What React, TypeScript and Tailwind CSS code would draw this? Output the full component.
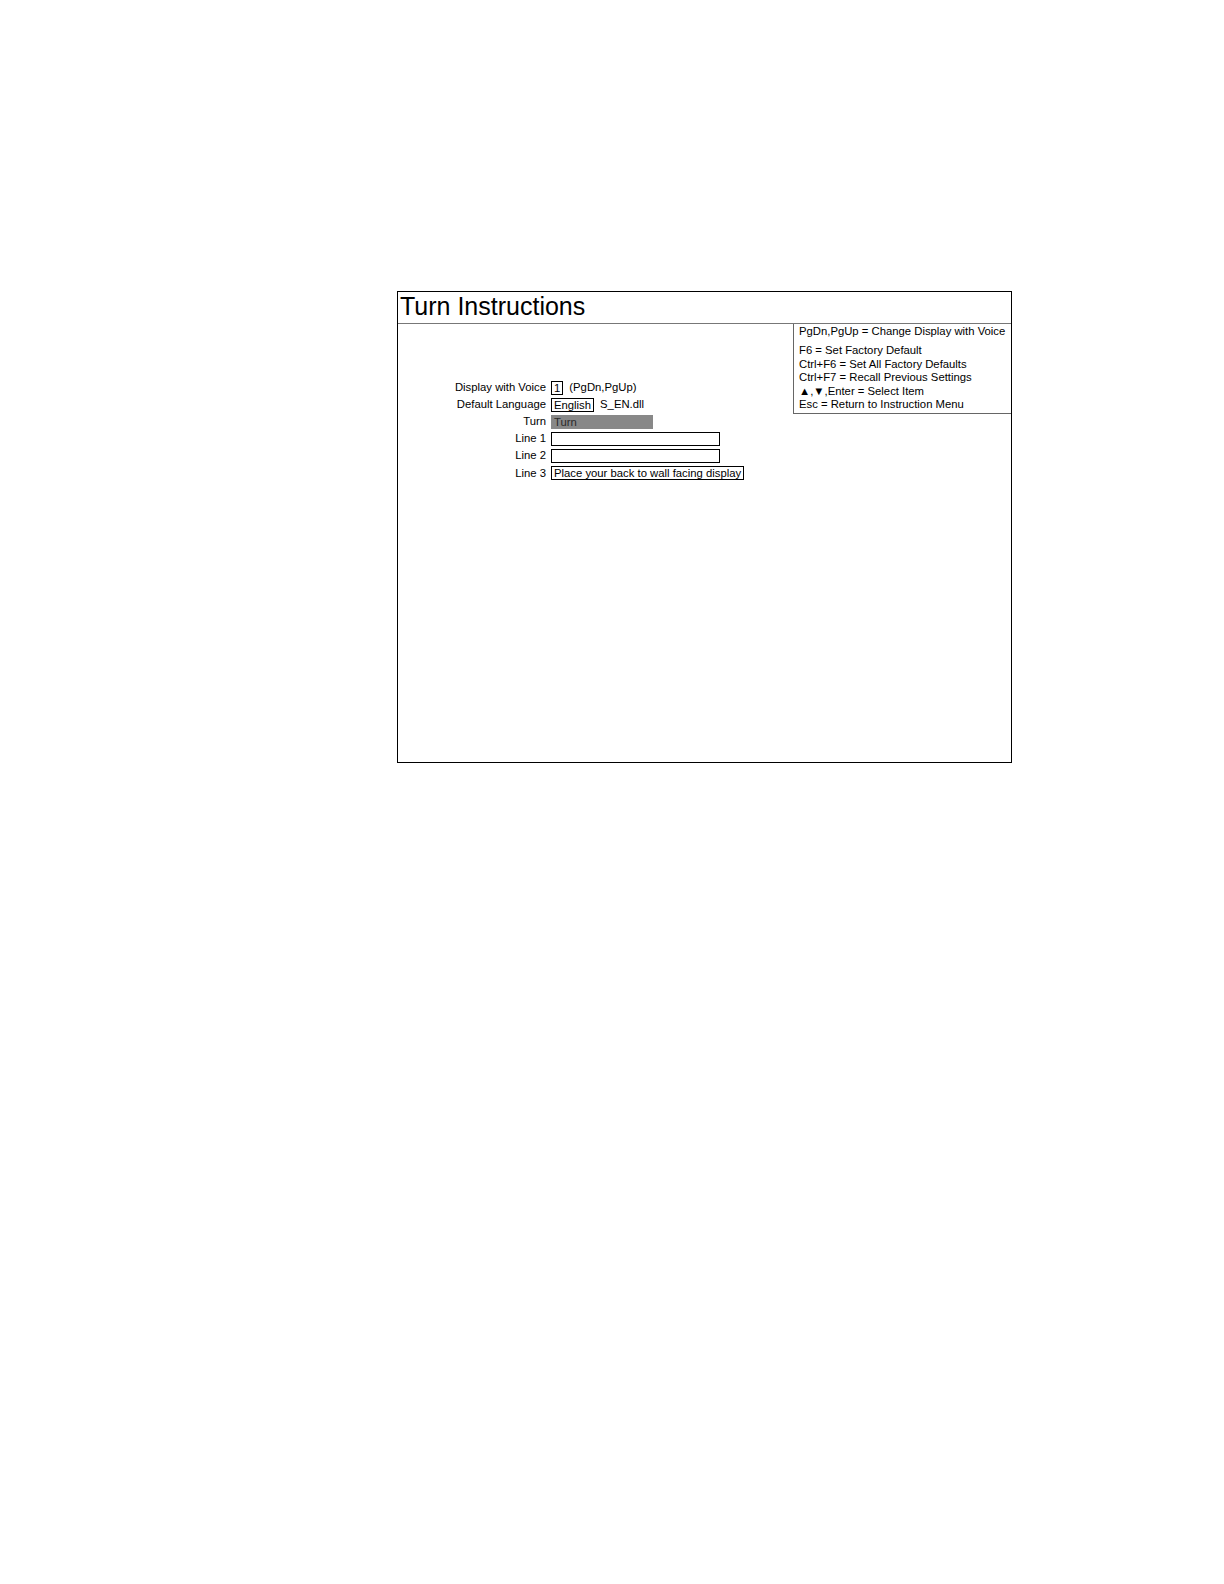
import React from 'react';

const font = { fontFamily: '"Liberation Sans", Arial, sans-serif' };

function Row({ label, children }: { label: string; children: React.ReactNode }) {
  return (
    <div className="flex h-[17.1px] items-center">
      <div className="w-[148px] text-right leading-[13px]">{label}</div>
      <div className="ml-[5px] flex items-center">{children}</div>
    </div>
  );
}

function Box({ className = '', children }: { className?: string; children?: React.ReactNode }) {
  return (
    <div className={`h-[14px] border border-black px-[2px] leading-[12px] whitespace-nowrap ${className}`}>
      {children}
    </div>
  );
}

export default function App() {
  const help = [
    'F6 = Set Factory Default',
    'Ctrl+F6 = Set All Factory Defaults',
    'Ctrl+F7 = Recall Previous Settings',
    '▲,▼,Enter = Select Item',
    'Esc = Return to Instruction Menu',
  ];

  return (
    <div className="min-h-[1584px] bg-white pt-[291px] pl-[397px] text-black" style={font}>
      <div className="flex h-[472px] w-[615px] flex-col border border-black">
        <div className="h-[32px] border-b border-[#777] pl-[2px] text-[25px] leading-[28px]">
          Turn Instructions
        </div>

        <div className="flex flex-1 text-[11.3px]">
          <div className="flex-1 pt-[55px]">
            <Row label="Display with Voice">
              <Box>1</Box>
              <span className="ml-[6px]">(PgDn,PgUp)</span>
            </Row>
            <Row label="Default Language">
              <Box>English</Box>
              <span className="ml-[6px]">S_EN.dll</span>
            </Row>
            <Row label="Turn">
              <div className="h-[14px] w-[102px] bg-[#888888] pl-[3px] leading-[14px] text-[#2a2a2a]">Turn</div>
            </Row>
            <Row label="Line 1">
              <Box className="w-[169px]" />
            </Row>
            <Row label="Line 2">
              <Box className="w-[169px]" />
            </Row>
            <Row label="Line 3">
              <Box>Place your back to wall facing display</Box>
            </Row>
          </div>

          <div className="h-[90px] w-[218px] self-start border-b border-l border-[#666] pl-[5px] pt-[0.5px] leading-[13.4px] whitespace-nowrap">
            <div>PgDn,PgUp = Change Display with Voice</div>
            <div className="mt-[6.4px]">
              {help.map((h) => (
                <div key={h}>{h}</div>
              ))}
            </div>
          </div>
        </div>
      </div>
    </div>
  );
}
